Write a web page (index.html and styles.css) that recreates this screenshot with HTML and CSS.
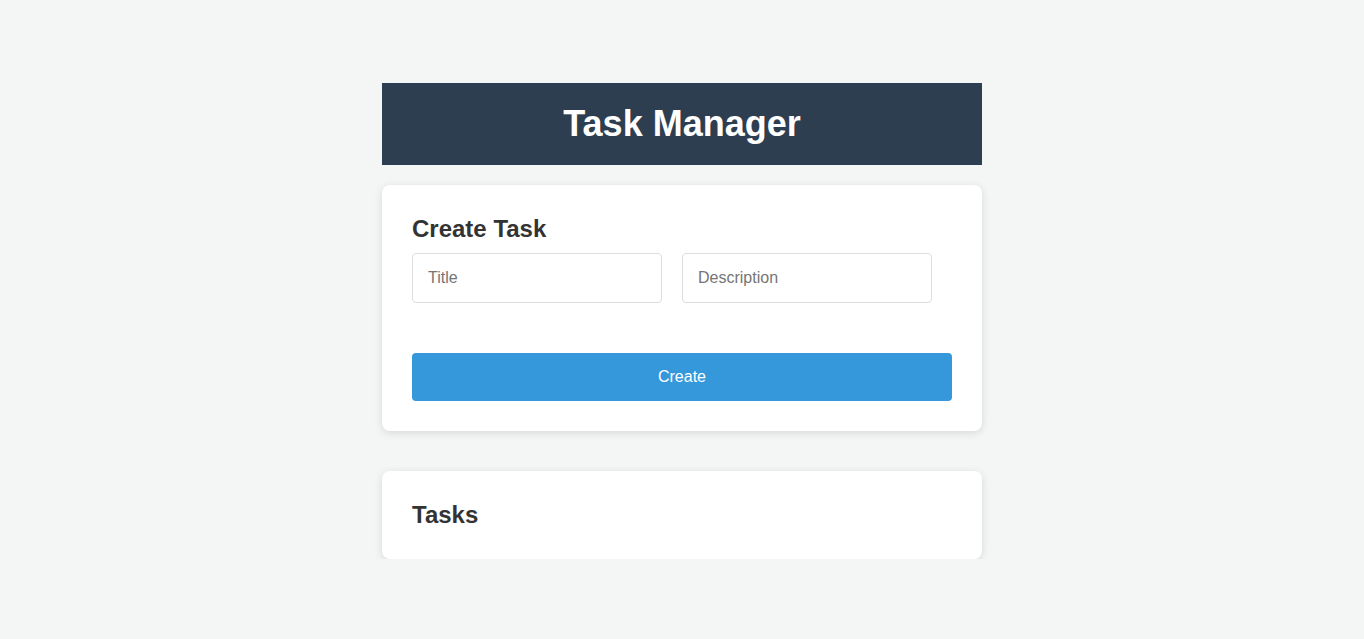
FILE: index.html
```html
<!DOCTYPE html>
<html>
<head>
<meta charset="utf-8">
<link rel="stylesheet" href="styles.css">
</head>
<body>
<div class="app">
  <header class="header"><h1>Task Manager</h1></header>
  <section class="card">
    <h2>Create Task</h2>
    <form class="form">
      <div class="fields">
        <input type="text" placeholder="Title">
        <input type="text" placeholder="Description">
      </div>
      <button type="button" class="btn">Create</button>
    </form>
  </section>
  <section class="card tasks">
    <h2>Tasks</h2>
  </section>
</div>
</body>
</html>
```
FILE: styles.css
```css
html, body { margin: 0; padding: 0; }
body {
  background: #f4f6f5;
  font-family: "Liberation Sans", Arial, sans-serif;
  color: #333;
}
.app {
  width: 600px;
  margin: 0 auto;
  padding-top: 83px;
}
.header {
  background: #2c3e50;
  height: 82px;
  display: flex;
  align-items: center;
  justify-content: center;
}
.header h1 {
  margin: 0;
  color: #fff;
  font-size: 36px;
  font-weight: bold;
}
.card {
  background: #fff;
  border-radius: 8px;
  box-shadow: 0 2px 8px rgba(0,0,0,0.12);
  padding: 30px;
  margin-top: 20px;
}
.card.tasks { margin-top: 40px; }
.card h2 {
  margin: 0;
  font-size: 24px;
  line-height: 28px;
  font-weight: bold;
  color: #333;
}
.form { margin-top: 10px; }
.fields {
  display: flex;
  gap: 20px;
  margin-bottom: 50px;
}
.fields input {
  width: 250px;
  height: 50px;
  box-sizing: border-box;
  border: 1px solid #ddd;
  border-radius: 4px;
  padding: 0 15px;
  font-family: "Liberation Sans", Arial, sans-serif;
  font-size: 16px;
  color: #333;
  outline: none;
}
.fields input::placeholder { color: #757575; }
.btn {
  display: block;
  width: 100%;
  height: 48px;
  border: none;
  border-radius: 4px;
  background: #3498db;
  color: #fff;
  font-family: "Liberation Sans", Arial, sans-serif;
  font-size: 16px;
  cursor: pointer;
}
```
